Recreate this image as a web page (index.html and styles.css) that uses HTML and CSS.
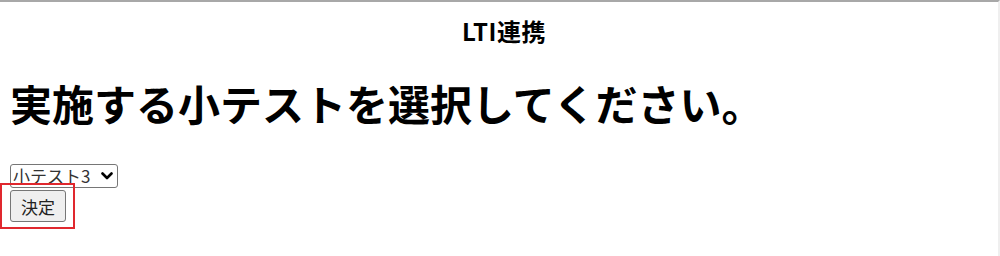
FILE: index.html
```html
<!DOCTYPE html>
<html lang="ja">
<head>
<meta charset="utf-8">
<title>LTI連携</title>
<link rel="stylesheet" href="styles.css">
</head>
<body>
<div class="page">
  <h3 class="title">LTI連携</h3>
  <h1 class="heading">実施する小テストを選択してください。</h1>
  <form class="form">
    <div class="select-wrap">
      <select class="quiz-select">
        <option>小テスト3</option>
      </select>
      <svg class="chevron" width="12" height="8" viewBox="0 0 12 8" aria-hidden="true"><path d="M1.5 1.5 L6 6 L10.5 1.5" fill="none" stroke="#000" stroke-width="2.6" stroke-linecap="round" stroke-linejoin="round"/></svg>
    </div>
    <div class="btn-wrap">
      <button type="button" class="submit-btn">決定</button>
      <span class="highlight"></span>
    </div>
  </form>
</div>
</body>
</html>
```
FILE: styles.css
```css
html, body {
  margin: 0;
  padding: 0;
  background: #ffffff;
}
body {
  font-family: "Noto Sans CJK JP", "Noto Sans", sans-serif;
  color: #000;
  width: 1000px;
  height: 256px;
  overflow: hidden;
}
.page {
  box-sizing: border-box;
  height: 256px;
  border-top: 2px solid #a8a8a8;
  border-right: 2px solid #efefef;
  padding-left: 10px;
}
.title {
  margin: 14px 0 0;
  text-align: center;
  font-size: 24px;
  line-height: 30px;
  font-weight: bold;
  letter-spacing: 0.5px;
}
.heading {
  margin: 31px 0 0;
  font-size: 42px;
  line-height: 52px;
  font-weight: bold;
}
.form {
  display: flex;
  flex-direction: column;
  align-items: flex-start;
  gap: 2px;
  margin-top: 35px;
}
.select-wrap {
  position: relative;
}
.quiz-select {
  -webkit-appearance: none;
  appearance: none;
  display: block;
  font-family: "Noto Sans CJK JP", sans-serif;
  font-size: 17px;
  height: 24px;
  width: 108px;
  padding: 0 0 0 2px;
  border: 1px solid #767676;
  border-radius: 3px;
  background: #fff;
  color: #333;
  line-height: 22px;
}
.chevron {
  position: absolute;
  right: 5px;
  top: 8px;
  pointer-events: none;
}
.btn-wrap {
  position: relative;
}
.submit-btn {
  font-family: "Noto Sans CJK JP", sans-serif;
  font-size: 17px;
  width: 56px;
  height: 32px;
  padding: 0;
  background: #efefef;
  border: 1px solid #767676;
  border-radius: 3px;
  color: #222;
  display: block;
}
.highlight {
  position: absolute;
  left: -10px;
  top: -7px;
  width: 75px;
  height: 46px;
  box-sizing: border-box;
  border: 2px solid #e0282e;
  pointer-events: none;
}
```
